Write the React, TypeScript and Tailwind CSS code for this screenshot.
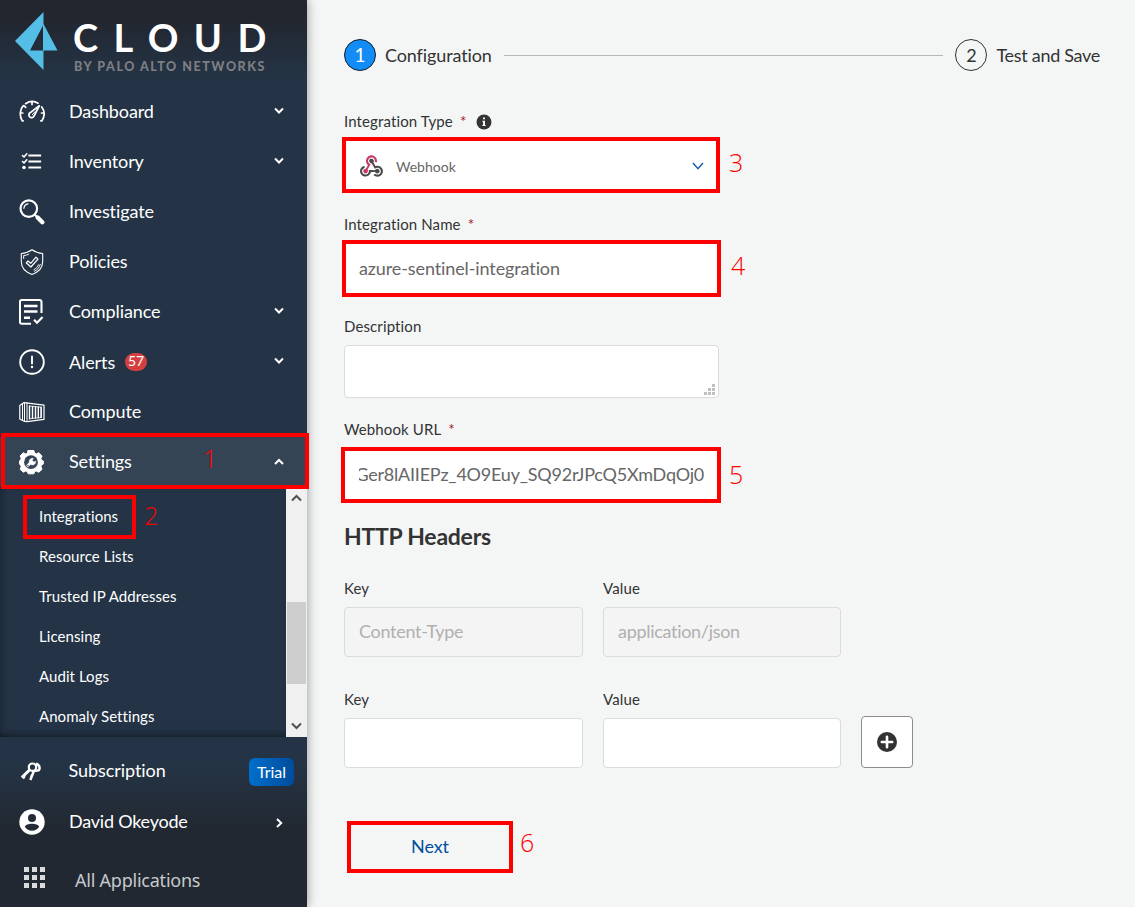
import React from "react";

type IconProps = { children: React.ReactNode; className?: string };

function Svg({ children, className = "" }: IconProps) {
  return (
    <svg
      viewBox="0 0 26 26"
      className={`h-[26px] w-[26px] shrink-0 ${className}`}
      fill="none"
      stroke="#fff"
      strokeLinecap="round"
      strokeLinejoin="round"
    >
      {children}
    </svg>
  );
}

const GaugeIcon = () => (
  <Svg>
    <path
      d="M4.200 21.800H3.200C.4 17 .6 10.500 4.300 6.700M6.600 4.700C10.500 2 15.500 2 19 4.200M22.700 8C25.700 12 25.600 17.500 23 21.800H21.800M13 3V5.500M5.200 6.800 6.700 8.300M1.600 14H3.800M22.500 14H24.500"
      strokeWidth="1.700"
    />
    <path d="M20.300 6.800 11.300 13.600A2.700 2.700 0 1 0 15 17.200Z" strokeWidth="1.800" />
    <path d="M13.300 15.800 16 12.600" strokeWidth="1" />
  </Svg>
);

const ChecklistIcon = () => (
  <Svg>
    <path d="M10.500 6.500H21M10.500 12.500H21M10.500 18.500H21" strokeWidth="2.200" strokeLinecap="square" />
    <path d="M3.500 6.500 5 8 7.800 4.800M3.500 12.500 5 14 7.800 10.800" strokeWidth="1.600" />
    <circle cx="5" cy="18.500" r="1.800" fill="#fff" stroke="none" />
  </Svg>
);

const SearchIcon = () => (
  <Svg>
    <circle cx="9.800" cy="9.600" r="8.300" strokeWidth="2.200" />
    <path d="M4.900 9.300A5 5 0 0 1 9 4.900" strokeWidth="1.200" />
    <path d="M15.800 15.700 18.500 18.400" strokeWidth="2" />
    <path d="M18.700 18.600 23.300 23.200" strokeWidth="4.300" />
  </Svg>
);

const ShieldIcon = () => (
  <Svg>
    <path
      d="M13 .8C10 3 6.500 4.200 2.300 4.500V12.500C2.300 18.600 6 22.900 13 25.400 20 22.900 23.700 18.600 23.700 12.500V4.500C19.500 4.200 16 3 13 .8Z"
      strokeWidth="1.100"
    />
    <path
      d="M4.700 9.500V7.200M4.800 6.600C6.800 6.400 8.300 5.900 9.800 5.200M21.300 15.500C20.300 18.700 18.200 21 15.500 22.300M19.500 15.800C18.500 18 17 19.600 15 20.700"
      strokeWidth="1"
    />
    <path d="M7.200 13.800 9 12 11.700 14.300 17 8.200 19 10.100 11.900 18Z" strokeWidth="1.200" />
  </Svg>
);

const ComplianceIcon = () => (
  <Svg>
    <path d="M12 24.800H2.800A2 2 0 0 1 .9 22.800V3A2 2 0 0 1 2.900 1H20.500A2 2 0 0 1 22.500 3V14" strokeWidth="2.100" strokeLinecap="butt" />
    <path d="M5 7H18.500M5 12.500H18.500M5 18.700H11" strokeWidth="2.600" strokeLinecap="butt" />
    <path d="M15 20.700 18 23.700 23.600 18" strokeWidth="2.200" strokeLinecap="butt" strokeLinejoin="miter" />
  </Svg>
);

const AlertIcon = () => (
  <Svg>
    <circle cx="13" cy="13" r="11.800" strokeWidth="1.900" />
    <path d="M13 7.500V14.500" strokeWidth="1.900" />
    <circle cx="13" cy="18" r="1.200" fill="#fff" stroke="none" />
  </Svg>
);

const ContainerIcon = () => (
  <Svg>
    <path d="M.8 6.500 5 3.600 25 6.200V20.300L8.200 22.600 5.500 22.500 .8 20Z" strokeWidth="1.200" />
    <path d="M8 3.700V22.400M3.500 5V21.300M5.500 4V22" strokeWidth="1" />
    <path d="M10.500 7V19.800M13.500 7.400V19.300M16.500 7.800V19M19.300 8V18.700M22 8.300V18.500" strokeWidth="1.400" />
    <path d="M10.500 7 22.500 8.300V18.500L10.500 19.800" strokeWidth=".8" />
  </Svg>
);

const GearIcon = () => (
  <Svg>
    <path
      d="M9.200 1.500H14.800L15.700 4.300 17.200 5 19.800 3.700 23 7 21.900 9.600 22.600 11.200 24.300 12V15L22.600 16.200 22 17.700 23 20.400 19.700 23.300 17.200 22 15.700 22.600 14.800 24.800H9.200L8.300 22.600 6.800 22 4.300 23.200 1.200 20.300 2.200 17.600 1.500 16.200 .6 15V12L1.500 11 2.200 9.500 1.200 6.900 4.300 3.700 6.800 5 8.300 4.300Z"
      fill="#fff"
      strokeWidth="1"
    />
    <circle cx="12" cy="13.200" r="6.900" fill="#344454" stroke="none" />
    <path d="M8.800 16.500 12.800 12.600" strokeWidth="2.700" />
    <path d="M16.800 12.500A3.300 3.300 0 1 1 14.200 9.400L13.100 11.300 14.600 12.900Z" fill="#fff" strokeWidth=".6" />
    <circle cx="8.900" cy="16.400" r=".7" fill="#344454" stroke="none" />
  </Svg>
);

const KeysIcon = () => (
  <Svg>
    <circle cx="13.500" cy="9.200" r="3.700" strokeWidth="2.200" />
    <path d="M10.500 12 2.800 19.500M3.800 18.500 5.800 20" strokeWidth="3" strokeLinecap="butt" />
    <path d="M17 5.800C20.500 6.500 21.700 10 19.500 12.700M14.800 13.200 11.300 22M13.800 18.800 11.300 18" strokeWidth="2.500" strokeLinecap="butt" />
    <path d="M15.500 12.900 19 12.500" strokeWidth="2.300" />
  </Svg>
);

const UserIcon = () => (
  <Svg>
    <circle cx="13" cy="13" r="12.700" fill="#fff" stroke="none" />
    <circle cx="13" cy="9" r="4" fill="#232b36" stroke="none" />
    <path
      d="M4.900 19C5 16.500 9.500 15.300 13 15.300S21 16.500 21.100 19C19.300 21.700 16.400 23.300 13 23.300S6.700 21.700 4.900 19Z"
      transform="translate(1.600 1.400) scale(.875)"
      fill="#232b36"
      stroke="none"
    />
  </Svg>
);

function Chevron({ dir }: { dir: "down" | "up" | "right" }) {
  const d = dir === "down" ? "M2 3.500 6 7.500 10 3.500" : dir === "up" ? "M2 8 6 4 10 8" : "M4 2 8.200 6 4 10";
  return (
    <svg viewBox="0 0 12 12" className="h-3 w-3 shrink-0" fill="none" stroke="#fff" strokeWidth="2">
      <path d={d} />
    </svg>
  );
}

function WebhookLogo() {
  return (
    <svg viewBox="0 0 256 239" className="mt-[2px] h-[22px] w-[23px] shrink-0">
      <path
        fill="#C73A63"
        d="M119.54 100.503c-10.61 17.836-20.775 35.108-31.152 52.25-2.665 4.401-3.984 7.986-1.855 13.58 5.878 15.454-2.414 30.493-17.998 34.575-14.697 3.851-29.016-5.808-31.932-21.543-2.584-13.927 8.224-27.58 23.58-29.757 1.286-.184 2.6-.205 4.762-.367l23.358-39.168C73.612 95.465 64.868 78.39 66.803 57.23c1.368-14.957 7.25-27.883 18-38.477 20.59-20.288 52.002-23.573 76.246-8.001 23.284 14.958 33.948 44.094 24.858 69.031-6.854-1.858-13.756-3.732-21.343-5.79 2.854-13.865.743-26.315-8.608-36.981-6.178-7.042-14.106-10.733-23.12-12.093-18.072-2.73-35.815 8.88-41.08 26.618-5.976 20.132 3.069 36.575 27.784 48.967z"
      />
      <path
        fill="#4B4B4B"
        d="M149.841 79.41c7.475 13.187 15.065 26.573 22.587 39.836 38.02-11.763 66.686 9.284 76.97 31.817 12.422 27.219 3.93 59.457-20.465 76.25-25.04 17.238-56.707 14.293-78.892-7.851 5.654-4.733 11.336-9.487 17.407-14.566 21.912 14.192 41.077 13.524 55.305-3.282 12.133-14.337 11.87-35.714-.615-49.75-14.408-16.197-33.707-16.691-57.035-1.143-9.677-17.168-19.522-34.199-28.893-51.491-3.16-5.828-6.648-9.21-13.77-10.443-11.893-2.062-19.571-12.275-20.032-23.717-.453-11.316 6.214-21.545 16.634-25.53 10.322-3.949 22.435-.762 29.378 8.014 5.674 7.17 7.477 15.24 4.491 24.083-.83 2.466-1.905 4.852-3.07 7.774z"
      />
      <path
        fill="#4A4A4A"
        d="M167.707 187.21h-45.77c-4.387 18.044-13.863 32.612-30.19 41.876-12.693 7.2-26.373 9.641-40.933 7.29-26.808-4.323-48.728-28.456-50.658-55.63-2.184-30.784 18.975-58.147 47.178-64.293 1.947 7.071 3.915 14.21 5.862 21.264-25.876 13.202-34.832 29.836-27.59 50.636 6.375 18.304 24.484 28.337 44.147 24.457 20.08-3.962 30.204-20.65 28.968-47.432 19.036 0 38.088-.197 57.126.097 7.434.117 13.173-.654 18.773-7.208 9.22-10.784 26.191-9.811 36.121.374 10.148 10.409 9.662 27.157-1.077 37.127-10.361 9.62-26.73 9.106-36.424-1.26-1.992-2.136-3.562-4.673-5.533-7.298z"
      />
    </svg>
  );
}

/* Red call-out frame laid over a control, with its step number. */
function Frame({ className }: { className: string }) {
  return <div className={`pointer-events-none absolute z-10 border-4 border-[#f00] ${className}`} />;
}

function Step({ n, className }: { n: number; className: string }) {
  return (
    <span
      className={`pointer-events-none absolute z-10 font-['Open_Sans',sans-serif] text-[25px] leading-[30px] font-light text-[#f00] ${className}`}
    >
      {n}
    </span>
  );
}

type NavItem = { label: string; icon: React.ReactNode; chevron?: "down"; badge?: string };

const NAV: NavItem[] = [
  { label: "Dashboard", icon: <GaugeIcon />, chevron: "down" },
  { label: "Inventory", icon: <ChecklistIcon />, chevron: "down" },
  { label: "Investigate", icon: <SearchIcon /> },
  { label: "Policies", icon: <ShieldIcon /> },
  { label: "Compliance", icon: <ComplianceIcon />, chevron: "down" },
  { label: "Alerts", icon: <AlertIcon />, chevron: "down", badge: "57" },
  { label: "Compute", icon: <ContainerIcon /> },
];

const SUBMENU = ["Integrations", "Resource Lists", "Trusted IP Addresses", "Licensing", "Audit Logs", "Anomaly Settings"];

function Sidebar() {
  return (
    <aside className="relative z-[1] flex h-full w-[307px] shrink-0 flex-col bg-[#243446] text-white shadow-[0_0_10px_rgba(0,0,0,0.4)]">
      <header className="flex h-[87px] shrink-0 bg-linear-to-b from-[#22262f] from-20% to-[#243446] to-90% pt-3 pl-[15px]">
        <svg viewBox="0 0 43 58" className="h-[58px] w-[43px] shrink-0" fill="#54bee6">
          <path fillRule="evenodd" d="M28.500 0V12L42.500 38.500H28.500V58L0 29ZM28 13.500 15 38.500H28Z" />
        </svg>
        <div className="flex flex-col pl-[15px]">
          <div className="mt-[5px] h-[40px] text-[38px] leading-[40px] font-bold tracking-[15.4px] whitespace-nowrap">CLOUD</div>
          <div className="mt-[3px] h-[14px] pl-[1px] text-[12.5px] leading-[14px] font-black tracking-[1.550px] whitespace-nowrap text-[#7d7f82]">
            BY PALO ALTO NETWORKS
          </div>
        </div>
      </header>

      <nav className="shrink-0">
        {NAV.map((item) => (
          <div key={item.label} className="flex h-[50px] items-center pr-[22px] pl-[18.500px] text-[18px] tracking-[-0.1px]">
            {item.icon}
            <span className={item.badge ? "ml-[24.500px]" : "mb-[2px] ml-[24.500px]"}>{item.label}</span>
            {item.badge && (
              <span className="mb-[1px] ml-[10px] flex h-[18px] w-[22px] items-center justify-center rounded-full bg-[#d43f3f] pb-[1px] text-[14px] leading-none">
                {item.badge}
              </span>
            )}
            <span className="flex-1" />
            {item.chevron && (
              <span className="mb-[2px]">
                <Chevron dir={item.chevron} />
              </span>
            )}
          </div>
        ))}
        <div className="relative flex h-[50px] items-center bg-[#344454] pr-[22px] pl-[18.500px] text-[18px] tracking-[-0.1px]">
          <GearIcon />
          <span className="mb-[2px] ml-[24.500px] flex-1">Settings</span>
          <Chevron dir="up" />
          <Frame className="-top-[4px] left-[1px] h-[56px] w-[308px]" />
          <Step n={1} className="top-[6px] left-[203px]" />
        </div>
      </nav>

      <div className="flex h-[250px] shrink-0">
        <ul className="flex-1 pt-[9px] pl-[39px] text-[15px] leading-[40px] tracking-[0.06px] shadow-[inset_4px_0_8px_-3px_rgba(0,0,0,0.3),inset_0_-8px_8px_-6px_rgba(0,0,0,0.4)]">
          {SUBMENU.map((label, i) => (
            <li key={label} className="relative h-10">
              {label}
              {i === 0 && (
                <>
                  <Frame className="-top-[1px] -left-[16px] h-[44px] w-[113px]" />
                  <Step n={2} className="top-[4px] left-[105px]" />
                </>
              )}
            </li>
          ))}
        </ul>
        <div className="flex w-[21px] flex-col items-center bg-[#f0f0f0]">
          <svg viewBox="0 0 11 8" className="mt-[7px] h-2 w-[11px]" fill="none" stroke="#505050" strokeWidth="2">
            <path d="M1 6.500 5.500 2 10 6.500" />
          </svg>
          <div className="mt-[100px] h-[82px] w-[19px] bg-[#cdcdcd]" />
          <svg viewBox="0 0 11 8" className="mt-[38px] h-2 w-[11px]" fill="none" stroke="#505050" strokeWidth="2">
            <path d="M1 1.500 5.500 6 10 1.500" />
          </svg>
        </div>
      </div>

      <footer className="flex flex-1 flex-col bg-linear-to-b from-[#243446] from-15% to-[#222831] to-55% pt-[9px]">
        <div className="flex h-[50px] items-center pr-[13px] pl-[18.500px] text-[18px] tracking-[-0.06px]">
          <KeysIcon />
          <span className="mb-[2px] ml-[24px] flex-1">Subscription</span>
          <span className="mt-[1px] flex h-7 w-[45px] items-center justify-center rounded-md bg-linear-to-r from-[#006fcc] to-[#004c9d] text-[16px]">
            Trial
          </span>
        </div>
        <div className="flex h-[50px] items-center pt-[1px] pr-[22px] pl-[18.500px] text-[18px] tracking-[-0.22px]">
          <UserIcon />
          <span className="ml-[24.500px] flex-1">David Okeyode</span>
          <span className="mt-[2px]">
            <Chevron dir="right" />
          </span>
        </div>
        <div className="flex flex-1 items-center pt-[8px] pl-[24px]">
          <div className="mb-[7px] grid grid-cols-3 gap-x-[3px] gap-y-[3px]">
            {Array.from({ length: 9 }, (_, i) => (
              <span key={i} className="h-[5px] w-[5px] bg-[#d8dadc]" />
            ))}
          </div>
          <span className="ml-[30px] font-['Noto_Sans',sans-serif] text-[18px] tracking-[-0.230px] text-[#c6c9cd]">All Applications</span>
        </div>
      </footer>
    </aside>
  );
}

function Label({ children, required }: { children: React.ReactNode; required?: boolean }) {
  return (
    <div className="flex h-5 items-center text-[15px] leading-5 tracking-[0.120px] whitespace-nowrap">
      {children}
      {required && <span className="ml-[7px] text-[#a5152a]">*</span>}
    </div>
  );
}

function HeaderField({ label, placeholder, className }: { label: string; placeholder?: string; className: string }) {
  return (
    <div className={className}>
      <Label>{label}</Label>
      <div
        className={`mt-[9px] flex h-[50px] items-center rounded border border-[#d8dcda] px-[14px] pb-[2px] text-[18px] tracking-[-0.3px] text-[#b0b0b0] ${
          placeholder ? "bg-[#f4f4f4]" : "bg-white"
        }`}
      >
        {placeholder}
      </div>
    </div>
  );
}

function Stepper() {
  return (
    <div className="flex h-8 items-center pr-[35px] text-[18px] whitespace-nowrap">
      <span className="flex h-8 w-8 items-center justify-center rounded-full border border-[#16202a] bg-[#148cf5] text-[19px] text-white">
        1
      </span>
      <span className="ml-[9px] tracking-[-0.120px]">Configuration</span>
      <span className="mx-3 h-px flex-1 bg-[#b5b9b8]" />
      <span className="flex h-8 w-8 items-center justify-center rounded-full border border-[#333] text-[18px]">2</span>
      <span className="ml-[9px] tracking-[-0.3px]">Test and Save</span>
    </div>
  );
}

export default function App() {
  return (
    <div className="flex h-[907px] w-[1135px] overflow-hidden bg-[#f4f6f6] font-['Lato',sans-serif] text-[#333] [font-variant-ligatures:no-common-ligatures]">
      <Sidebar />
      <main className="flex-1 pt-[39px] pl-[37px]">
        <Stepper />

        <div className="mt-[40px] flex items-center">
          <Label required>Integration Type</Label>
          <svg viewBox="0 0 16 16" className="mt-[2px] ml-[10px] h-4 w-4">
            <circle cx="8" cy="8" r="7.500" fill="#333" />
            <path d="M7 3.500H9V5.300H7ZM6.300 6.700H9V11H9.700V12H6.300V11H7V7.700H6.300Z" fill="#f4f6f6" />
          </svg>
        </div>
        <div className="relative mt-[8px] flex h-[52px] w-[375px] items-center bg-white pr-[15px] pl-4 text-[14px] text-[#666]">
          <WebhookLogo />
          <span className="mt-[2px] ml-[13px] flex-1">Webhook</span>
          <svg viewBox="0 0 12 8" className="mt-[1px] h-2 w-3" fill="none" stroke="#1459a4" strokeWidth="1.400">
            <path d="M1 1 6 6.800 11 1" />
          </svg>
          <Frame className="-top-[2px] -left-[2px] h-[56px] w-[378px]" />
          <Step n={3} className="top-[8px] left-[385px]" />
        </div>

        <div className="mt-[23px]">
          <Label required>Integration Name</Label>
        </div>
        <div className="relative mt-[8px] flex h-[52px] w-[375px] items-center bg-white px-[15px] text-[18px] tracking-[-0.110px] text-[#666]">
          azure-sentinel-integration
          <Frame className="-top-[2px] -left-[2px] h-[57px] w-[379px]" />
          <Step n={4} className="top-[8px] left-[387px]" />
        </div>

        <div className="mt-[22px]">
          <Label>Description</Label>
        </div>
        <div className="mt-[9px] flex h-[53px] w-[375px] items-end justify-end rounded border border-[#d8dcda] bg-white pr-[3px] pb-[2px]">
          <svg viewBox="0 0 11 11" className="h-[11px] w-[11px]" fill="#bfbfbf">
            <path d="M8 0h3v3H8ZM4 4h3v3H4ZM8 4h3v3H8ZM0 8h3v3H0ZM4 8h3v3H4ZM8 8h3v3H8Z" />
          </svg>
        </div>

        <div className="mt-[21px]">
          <Label required>Webhook URL</Label>
        </div>
        <div className="relative mt-[10px] flex h-[52px] w-[375px] items-center bg-white px-[15px] pb-[2px] text-[18px] tracking-[-0.220px] text-[#666]">
          <div className="flex w-[345px] justify-end overflow-hidden whitespace-nowrap">Ger8lAIIEPz_4O9Euy_SQ92rJPcQ5XmDqOj0</div>
          <Frame className="-top-[2px] -left-[3px] h-[56px] w-[380px]" />
          <Step n={5} className="top-[10px] left-[385px]" />
        </div>

        <h2 className="mt-[19px] text-[23px] leading-[32px] font-bold tracking-[-0.250px]">HTTP Headers</h2>

        <div className="mt-[26px] flex gap-5">
          <HeaderField label="Key" placeholder="Content-Type" className="w-[239px]" />
          <HeaderField label="Value" placeholder="application/json" className="w-[238px]" />
        </div>
        <div className="mt-[32px] flex items-end gap-5">
          <HeaderField label="Key" className="w-[239px]" />
          <HeaderField label="Value" className="w-[238px]" />
          <button className="flex h-[52px] w-[52px] items-center justify-center rounded border border-[#8c8c8c] bg-white">
            <svg viewBox="0 0 20 20" className="h-5 w-5">
              <circle cx="10" cy="10" r="10" fill="#333" />
              <path d="M10 4.800V15.200M4.800 10H15.200" stroke="#fff" strokeWidth="2.600" strokeLinecap="round" />
            </svg>
          </button>
        </div>

        <div className="relative mt-[53px] ml-[3px] flex h-[52px] w-[166px] items-center justify-center border-4 border-[#f00] pb-[2px] text-[18px] tracking-[-0.1px] text-[#00509d]">
          Next
          <Step n={6} className="top-[2px] left-[169px]" />
        </div>
      </main>
    </div>
  );
}
